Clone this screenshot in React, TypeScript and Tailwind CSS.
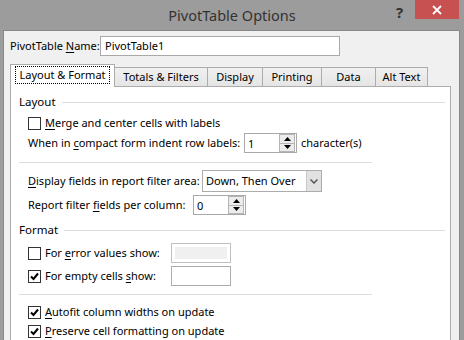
import type { ReactNode } from "react";

const font = { fontFamily: '"Noto Sans", "Open Sans", sans-serif' };

function Key({ children }: { children: ReactNode }) {
  return <span className="underline underline-offset-2">{children}</span>;
}

function CheckBox({ checked }: { checked?: boolean }) {
  return (
    <div className="w-[13px] h-[13px] border border-[#333] bg-white flex items-center justify-center shrink-0">
      {checked && (
        <svg width="9" height="9" viewBox="0 0 9 9">
          <path d="M1 4.5 L3.5 7 L8 1.5" fill="none" stroke="#000" strokeWidth="2" />
        </svg>
      )}
    </div>
  );
}

function Spin({ value }: { value: string }) {
  return (
    <div className="w-[53px] h-[20px] shrink-0 border border-[#a9a9a9] bg-white flex items-center">
      <span className="flex-1 pl-[3px] leading-none">{value}</span>
      <div className="w-[16px] h-[18px] flex flex-col border border-[#b5b5b5] mr-px">
        <div className="flex-1 bg-[#ececec] border-b border-[#b5b5b5] flex items-center justify-center">
          <svg width="7" height="4" viewBox="0 0 7 4">
            <path d="M0 4 L3.5 0 L7 4 Z" fill="#000" />
          </svg>
        </div>
        <div className="flex-1 bg-[#ececec] flex items-center justify-center">
          <svg width="7" height="4" viewBox="0 0 7 4">
            <path d="M0 0 L3.5 4 L7 0 Z" fill="#000" />
          </svg>
        </div>
      </div>
    </div>
  );
}

function Header({ title }: { title: string }) {
  return (
    <div className="h-[16px] flex items-center pl-[8px] pr-[5px] gap-[6px]">
      <span className="text-[11.5px]">{title}</span>
      <div className="h-px bg-[#dcdcdc] flex-1" />
    </div>
  );
}

const tabs = [
  { label: "Totals & Filters", w: "w-[94px]" },
  { label: "Display", w: "w-[56px]" },
  { label: "Printing", w: "w-[60px]" },
  { label: "Data", w: "w-[55px]" },
  { label: "Alt Text", w: "w-[53px]" },
];

export default function App() {
  return (
    <div
      className="w-[464px] h-[340px] bg-[#9c9c9c] flex flex-col overflow-hidden text-[11px] text-black whitespace-nowrap"
      style={font}
    >
      {/* Title bar */}
      <div className="h-[30px] relative flex items-center justify-center shrink-0">
        <span className="text-[14.5px] text-[#333] pt-[1px]">PivotTable Options</span>
        <span className="absolute left-[396px] top-[1px] text-[15px] font-bold text-[#333]">?</span>
        <div className="absolute left-[415px] top-0 w-[44px] h-[19px] bg-[#c75050] flex items-center justify-center">
          <svg width="10" height="10" viewBox="0 0 10 10">
            <path d="M1 1 L9 9 M9 1 L1 9" stroke="#fff" strokeWidth="1.8" />
          </svg>
        </div>
      </div>

      {/* Body */}
      <div className="flex-1 ml-[3px] mr-[4px] border-l border-r border-t border-[#888] bg-[#f0f0f0] flex flex-col">
        <div className="flex items-center h-[20px] mt-[5px] pl-[6px]">
          <span className="w-[90px] shrink-0">
            PivotTable <Key>N</Key>ame:
          </span>
          <div className="w-[240px] h-[20px] border border-[#a9a9a9] bg-white flex items-center pl-[4px]">
            PivotTable1
          </div>
        </div>

        {/* Tabs */}
        <div className="flex items-end h-[22px] mt-[8px] pl-[6px] relative z-10">
          <div className="w-[105px] h-[23px] -mb-px bg-white border border-b-0 border-[#acacac] flex items-start justify-center pt-[1px]">
            <span className="border border-dotted border-black px-[3px] h-[18px] flex items-center">
              Layout &amp; Format
            </span>
          </div>
          {tabs.map((t) => (
            <div
              key={t.label}
              className={`${t.w} h-[19px] -ml-px border border-b-0 border-[#acacac] bg-gradient-to-b from-[#f0f0f0] to-[#e5e5e5] flex items-center justify-center`}
            >
              {t.label}
            </div>
          ))}
        </div>

        {/* Panel */}
        <div className="flex-1 ml-[6px] mr-[8px] border border-[#acacac] bg-white flex flex-col">
          <div className="mt-[7px]">
            <Header title="Layout" />
          </div>
          <div className="h-[20px] mt-[3px] pl-[17px] flex items-center gap-[4px]">
            <CheckBox />
            <span>
              <Key>M</Key>erge and center cells with labels
            </span>
          </div>
          <div className="h-[20px] pl-[17px] flex items-center">
            <span className="w-[216px] shrink-0">
              When in <Key>c</Key>ompact form indent row labels:
            </span>
            <Spin value="1" />
            <span className="ml-[4px]">character(s)</span>
          </div>
          <div className="h-px bg-[#dcdcdc] mt-[9px] ml-[8px] w-[353px]" />

          <div className="h-[22px] mt-[7px] pl-[17px] flex items-center">
            <span className="w-[174px] shrink-0">
              <Key>D</Key>isplay fields in report filter area:
            </span>
            <div className="w-[120px] h-[22px] border border-[#acacac] bg-white flex items-center">
              <span className="flex-1 pl-[3px]">Down, Then Over</span>
              <div className="w-[15px] h-[20px] bg-[#e1e1e1] border-l border-[#c8c8c8] flex items-center justify-center">
                <svg width="8" height="5" viewBox="0 0 8 5">
                  <path d="M0.5 0.5 L4 4 L7.5 0.5" fill="none" stroke="#555" strokeWidth="1.5" />
                </svg>
              </div>
            </div>
          </div>
          <div className="h-[20px] mt-[3px] pl-[17px] flex items-center">
            <span className="w-[165px] shrink-0">
              Report filter <Key>f</Key>ields per column:
            </span>
            <Spin value="0" />
          </div>

          <div className="mt-[7px]">
            <Header title="Format" />
          </div>
          <div className="h-[20px] mt-[5px] pl-[17px] flex items-center">
            <div className="w-[143px] shrink-0 flex items-center gap-[4px]">
              <CheckBox />
              <span>
                For <Key>e</Key>rror values show:
              </span>
            </div>
            <div className="w-[60px] h-[20px] border border-[#c0c0c0] bg-white p-[3px]">
              <div className="w-full h-full bg-[#f0f0f0]" />
            </div>
          </div>
          <div className="h-[20px] mt-[3px] pl-[17px] flex items-center">
            <div className="w-[143px] shrink-0 flex items-center gap-[4px]">
              <CheckBox checked />
              <span>
                For empty cells <Key>s</Key>how:
              </span>
            </div>
            <div className="w-[60px] h-[20px] border border-[#acacac] bg-white" />
          </div>
          <div className="h-px bg-[#dcdcdc] mt-[8px] ml-[8px] w-[353px]" />

          <div className="h-[18px] mt-[8px] pl-[17px] flex items-center gap-[4px]">
            <CheckBox checked />
            <span>
              <Key>A</Key>utofit column widths on update
            </span>
          </div>
          <div className="h-[18px] mt-[1px] pl-[17px] flex items-center gap-[4px]">
            <CheckBox checked />
            <span>
              <Key>P</Key>reserve cell formatting on update
            </span>
          </div>
        </div>
      </div>
    </div>
  );
}
